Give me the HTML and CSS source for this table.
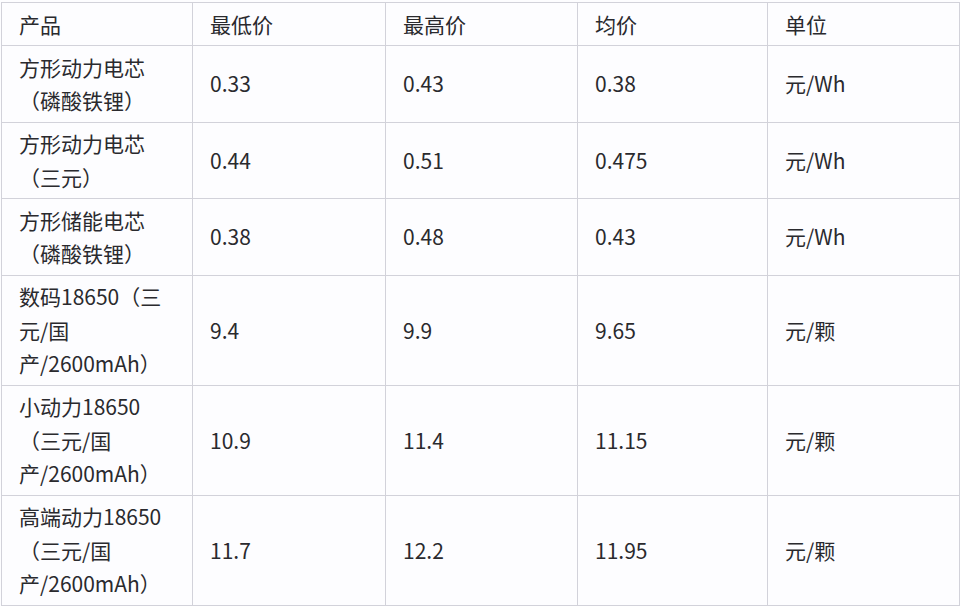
FILE: index.html
```html
<!DOCTYPE html>
<html lang="zh-CN">
<head>
<meta charset="utf-8">
<title>电芯价格</title>
<link rel="stylesheet" href="styles.css">
</head>
<body>
<table class="price-table">
  <colgroup>
    <col class="c1"><col class="c2"><col class="c3"><col class="c4"><col class="c5">
  </colgroup>
  <thead>
    <tr><th>产品</th><th>最低价</th><th>最高价</th><th>均价</th><th>单位</th></tr>
  </thead>
  <tbody>
    <tr><td>方形动力电芯（磷酸铁锂）</td><td>0.33</td><td>0.43</td><td>0.38</td><td>元/Wh</td></tr>
    <tr><td>方形动力电芯（三元）</td><td>0.44</td><td>0.51</td><td>0.475</td><td>元/Wh</td></tr>
    <tr><td>方形储能电芯（磷酸铁锂）</td><td>0.38</td><td>0.48</td><td>0.43</td><td>元/Wh</td></tr>
    <tr><td>数码18650（三元/国产/2600mAh）</td><td>9.4</td><td>9.9</td><td>9.65</td><td>元/颗</td></tr>
    <tr><td>小动力18650（三元/国产/2600mAh）</td><td>10.9</td><td>11.4</td><td>11.15</td><td>元/颗</td></tr>
    <tr><td>高端动力18650（三元/国产/2600mAh）</td><td>11.7</td><td>12.2</td><td>11.95</td><td>元/颗</td></tr>
  </tbody>
</table>
</body>
</html>
```
FILE: styles.css
```css
html, body {
  margin: 0;
  padding: 0;
  background: #fdfdff;
}
body {
  padding: 2px 0 0 1px;
  font-family: "Noto Sans CJK SC", "Noto Sans", sans-serif;
  font-size: 21px;
  color: #2a2a2e;
}
.price-table {
  width: 958px;
  border-collapse: collapse;
  table-layout: fixed;
}
.c1 { width: 191px; }
.c2 { width: 193px; }
.c3 { width: 192px; }
.c4 { width: 190px; }
.c5 { width: 192px; }
.price-table th,
.price-table td {
  border: 1px solid #d2d2da;
  padding: 4.5px 16px 4px 17px;
  line-height: 33.5px;
  text-align: left;
  font-weight: normal;
  vertical-align: middle;
}
```
